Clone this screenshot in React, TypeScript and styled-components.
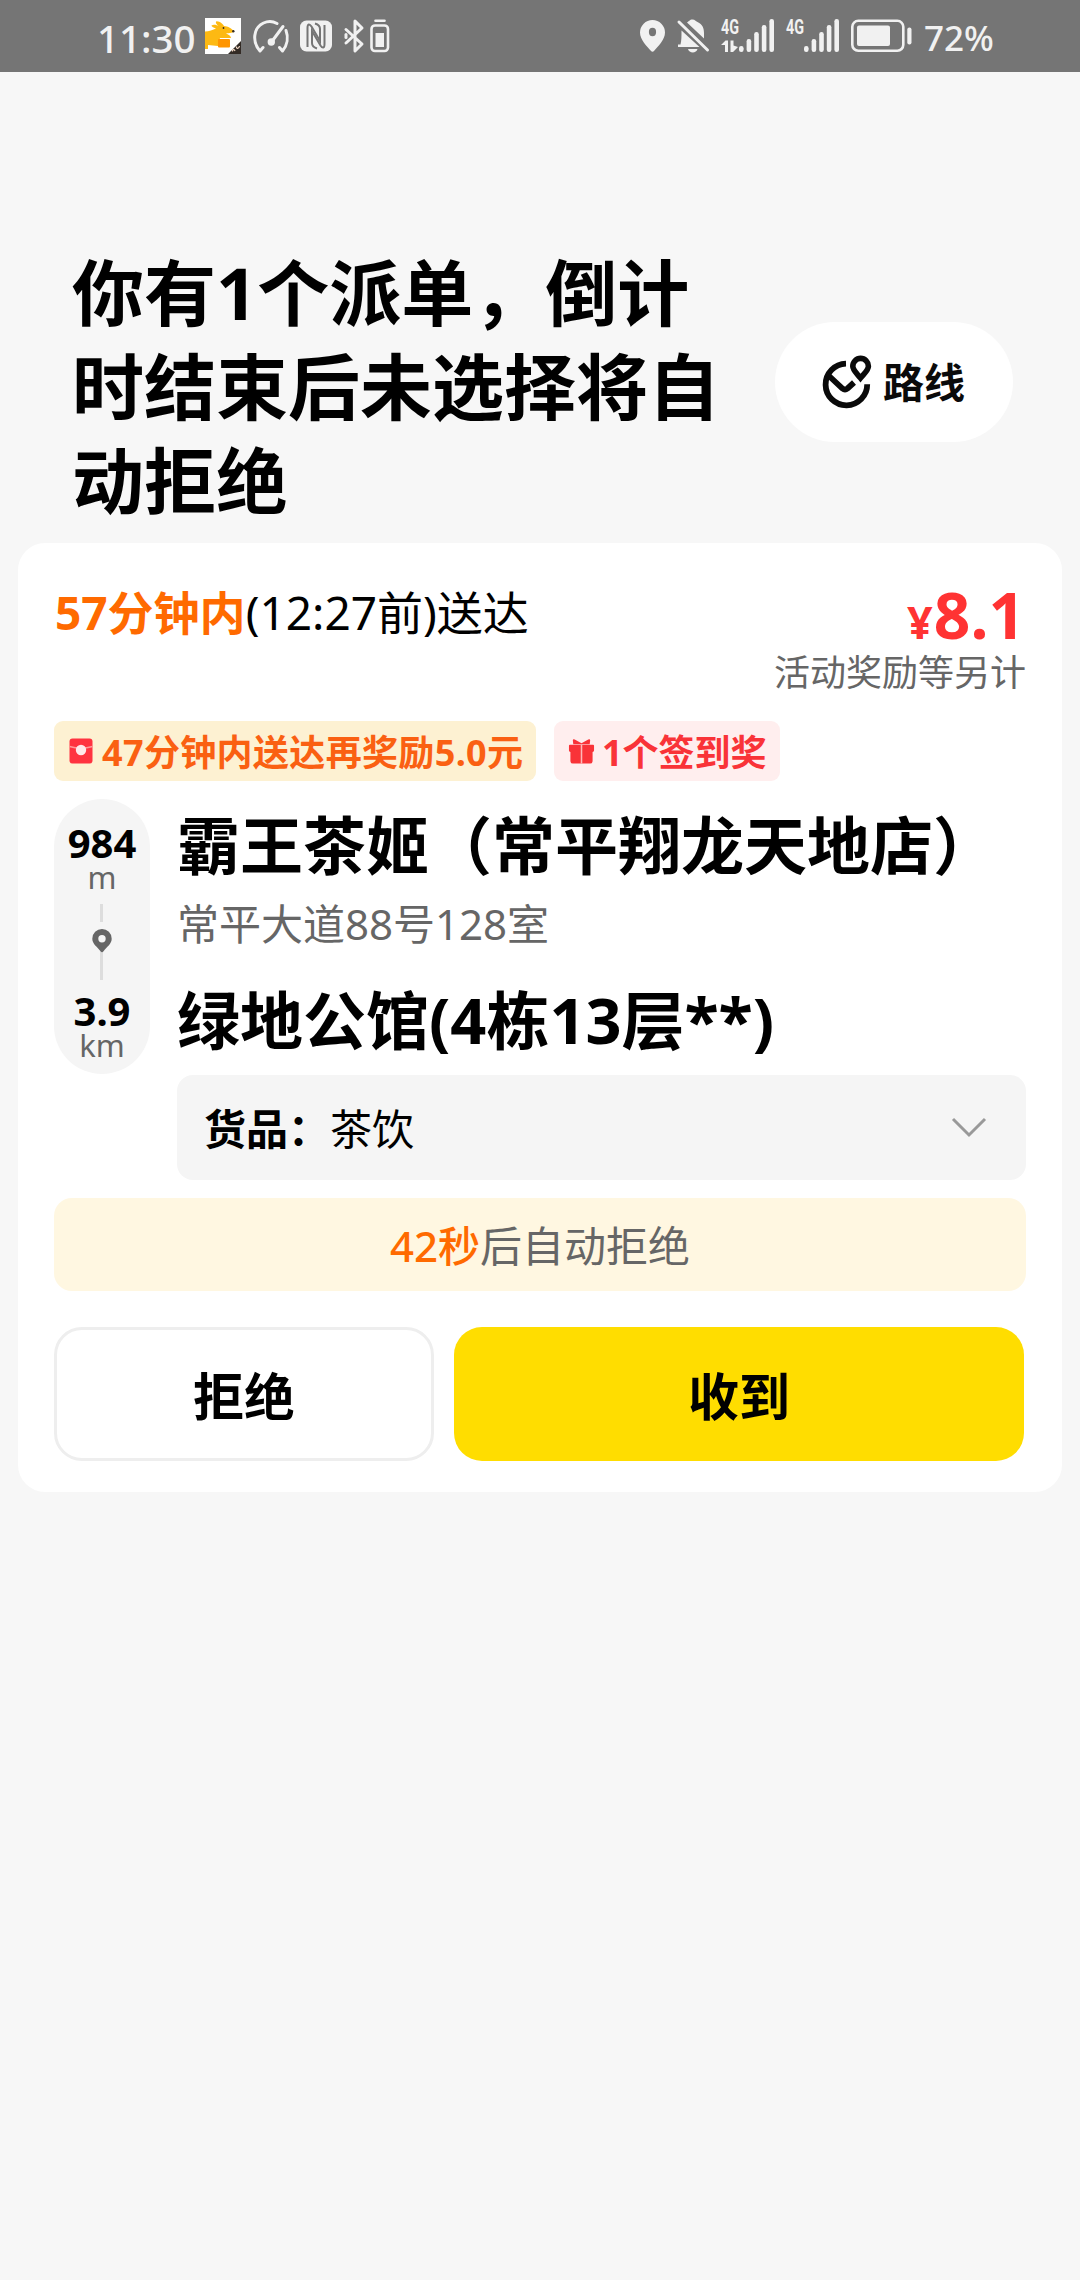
import React from "react";
import styled, { createGlobalStyle } from "styled-components";

const GlobalStyle = createGlobalStyle`
  * { box-sizing: border-box; }
  html, body { margin: 0; padding: 0; background: #f7f7f7; }
  body { font-family: "Noto Sans", "Noto Sans CJK SC", sans-serif; color: #000; }
  svg { display: block; flex: none; overflow: visible; }
`;

const Screen = styled.main`
  width: 1080px;
  min-height: 2280px;
  background: #f7f7f7;
  display: flex;
  flex-direction: column;
`;

const StatusBar = styled.header`
  height: 72px;
  flex: none;
  background: #757575;
  color: #f1f1f1;
  display: flex;
  justify-content: space-between;
  padding: 0 88px 0 97px;
`;

const StatusGroup = styled.div<{ $gap: number }>`
  display: flex;
  align-items: center;
  gap: ${(p) => p.$gap}px;
`;

const StatusText = styled.span<{ $size: number; $width: number }>`
  font-size: ${(p) => p.$size}px;
  font-weight: 500;
  line-height: 68px;
  padding-top: 3px;
  width: ${(p) => p.$width}px;
  white-space: nowrap;
`;

const Heading = styled.section`
  display: flex;
  align-items: flex-start;
  justify-content: space-between;
  padding: 173px 67px 16px 72px;
`;

const Title = styled.h1`
  margin: 0;
  width: 660px;
  font-size: 72px;
  font-weight: 700;
  line-height: 94px;
`;

const RouteButton = styled.button`
  margin-top: 77px;
  width: 238px;
  height: 120px;
  border: 0;
  border-radius: 60px;
  background: #fff;
  color: #0a0a0a;
  display: flex;
  align-items: center;
  gap: 11px;
  padding: 0 0 0 47px;
  font: 700 41px/60px "Noto Sans", "Noto Sans CJK SC", sans-serif;
  white-space: nowrap;
`;

const Card = styled.section`
  margin: 0 18px;
  height: 949px;
  padding: 38px 36px 31px;
  background: #fff;
  border-radius: 27px;
  display: flex;
  flex-direction: column;
`;

const Summary = styled.div`
  display: flex;
  justify-content: space-between;
  height: 140px;
`;

const Deadline = styled.p`
  margin: 1px 0 0 1px;
  font-size: 46px;
  line-height: 60px;
  white-space: nowrap;
`;

const Highlight = styled.span<{ $weight: number }>`
  color: #ff6a00;
  font-weight: ${(p) => p.$weight};
`;

const Fee = styled.div`
  display: flex;
  flex-direction: column;
  align-items: flex-end;
  padding-top: 4px;
  gap: 6px;
`;

const Price = styled.strong`
  display: flex;
  align-items: baseline;
  gap: 1px;
  height: 60px;
  margin-right: 1px;
  color: #ff3333;
  font-size: 64px;
  line-height: 60px;
  font-weight: 700;
`;

const Currency = styled.small`
  font-size: 45px;
  line-height: 40px;
`;

const FeeNote = styled.span`
  color: #666;
  font-size: 36px;
  line-height: 44px;
`;

const Tags = styled.div`
  display: flex;
  gap: 18px;
`;

const Tag = styled.div<{ $bg: string; $color: string; $width: number; $spacing?: number }>`
  width: ${(p) => p.$width}px;
  height: 60px;
  border-radius: 9px;
  background: ${(p) => p.$bg};
  color: ${(p) => p.$color};
  display: flex;
  align-items: center;
  gap: 7px;
  padding-left: 14px;
  font-size: 36px;
  line-height: 60px;
  font-weight: 700;
  letter-spacing: ${(p) => p.$spacing ?? 0}px;
  white-space: nowrap;
`;

const TagLabel = styled.span`
  padding-top: 3px;
`;

const Trip = styled.div`
  display: flex;
  align-items: flex-start;
  gap: 27px;
  margin-top: 18px;
`;

const DistancePill = styled.div`
  width: 96px;
  height: 275px;
  border-radius: 48px;
  background: #f5f5f5;
  padding-top: 24px;
  display: flex;
  flex-direction: column;
  align-items: center;
`;

const Distance = styled.b`
  font-size: 40px;
  line-height: 40px;
`;

const Unit = styled.span`
  color: #666;
  font-size: 31px;
  line-height: 28px;
`;

const Connector = styled.svg`
  margin: 13px 0 11px;
`;

const Stops = styled.div`
  flex: 1;
  display: flex;
  flex-direction: column;
  padding-top: 8px;
`;

const Place = styled.h2`
  margin: 0;
  font-size: 63px;
  line-height: 76px;
  font-weight: 700;
  white-space: nowrap;
`;

const Address = styled.p`
  margin: 15px 0 32px;
  color: #666;
  font-size: 42px;
  line-height: 52px;
`;

const Goods = styled.div`
  margin-top: 17px;
  height: 105px;
  border-radius: 16px;
  background: #f5f5f5;
  padding: 0 40px 0 27px;
  display: flex;
  align-items: center;
  justify-content: space-between;
  font-size: 42px;
  line-height: 60px;
`;

const GoodsText = styled.span`
  padding-top: 3px;
`;

const Countdown = styled.div`
  margin-top: 18px;
  height: 93px;
  border-radius: 18px;
  background: #fff7e1;
  color: #666;
  text-align: center;
  font-size: 42px;
  line-height: 96px;
`;

const Actions = styled.div`
  display: flex;
  gap: 20px;
  margin: 36px 2px 0 0;
`;

const ActionButton = styled.button<{ $primary?: boolean }>`
  height: 134px;
  flex: ${(p) => (p.$primary ? "1" : "0 0 380px")};
  border-radius: 28px;
  border: ${(p) => (p.$primary ? "0" : "3px solid #eee")};
  background: ${(p) => (p.$primary ? "#ffdd00" : "#fff")};
  padding: 4px 0 0;
  color: #000;
  font: 700 51px/60px "Noto Sans", "Noto Sans CJK SC", sans-serif;
`;

const CourierIcon = () => (
  <svg width="36" height="36" viewBox="0 0 36 36">
    <rect width="36" height="36" fill="#fff" />
    <path d="M0 13.500C4 13.500 8 12 11 10.500C8 9.500 6.500 8.500 6.500 7.500C8.500 6 12 7 13.500 8C11.500 6 10 4.500 11.500 3.200C15 3 18 6 19 8C23 8 27 11 29 13C29 15 24 15 21 15.500C24 17 26 18 26 20H15L13 28L3 27L3 31L0 31Z" fill="#fdb913" />
    <circle cx="18.500" cy="10" r="0.900" fill="#332b25" />
    <circle cx="28.300" cy="13.200" r="1.200" fill="#332b25" />
    <rect x="13" y="21" width="12" height="8.500" rx="1" fill="#ff9500" />
    <path d="M36 23V36H23Z" fill="#332b25" />
    <path d="M27.500 33.500C27 31 29.500 31 30 33M31.500 28.500C31 31 34 31 34.500 28" fill="none" stroke="#f6dcc8" strokeWidth="1.200" />
  </svg>
);

const GaugeIcon = () => (
  <svg width="36" height="36" viewBox="0 0 36 36" fill="none" stroke="#f1f1f1" strokeWidth="3" strokeLinecap="round" strokeLinejoin="round">
    <path d="M10 29.500L7 33C-1 24 0 10 10.500 5C15 3 20 3.300 24 5.500" />
    <path d="M33 12.500C35.500 19 34.500 27 29.500 33L26.500 29.500" />
    <path d="M18.500 24L30 8.500" />
    <circle cx="18.300" cy="24" r="2.200" fill="#f1f1f1" />
  </svg>
);

const NfcIcon = () => (
  <svg width="32" height="32" viewBox="0 0 32 32">
    <rect y="0.500" width="32" height="31" rx="6.500" fill="#f1f1f1" />
    <path d="M7.500 27V8C7.500 3.500 9.500 3.500 11.500 6.500L20 21V9C20 5.500 18 4.500 15 3.500" fill="none" stroke="#757575" strokeWidth="2" />
    <path d="M24.500 5V24C24.500 28.500 22.500 28.500 20.500 25.500L12 11V23C12 26.500 14 27.500 17 28.500" fill="none" stroke="#757575" strokeWidth="2" />
  </svg>
);

const BluetoothBatteryIcon = () => (
  <svg width="46" height="36" viewBox="0 0 46 36" fill="none" stroke="#f1f1f1" strokeWidth="3" strokeLinejoin="round" strokeLinecap="round">
    <path d="M2 11.500L18 26L11 33V3L18 10L2 25" />
    <path d="M2 16.500V19.500" />
    <rect x="27.500" y="7.500" width="16.500" height="25.500" rx="3.500" strokeWidth="2.600" />
    <path d="M31.500 2.700H40.500" strokeWidth="2.600" />
    <rect x="31.500" y="15" width="8.500" height="14" fill="#f1f1f1" stroke="none" />
  </svg>
);

const LocationIcon = () => (
  <svg width="25" height="32" viewBox="0 0 25 32">
    <path fillRule="evenodd" d="M12.500 0A12.500 12.500 0 0 1 25 12.500C25 20 18 26 14.200 30.800Q12.500 32.500 10.800 30.800C7 26 0 20 0 12.500A12.500 12.500 0 0 1 12.500 0ZM12.500 7.800A3.600 4.200 0 0 0 12.500 16.200A3.600 4.200 0 0 0 12.500 7.800Z" fill="#f1f1f1" />
  </svg>
);

const MutedBellIcon = () => (
  <svg width="32" height="34" viewBox="0 0 32 34" fill="#f1f1f1">
    <path d="M4.500 11.500L22.500 28H1V25.500H3.500C4.500 22 4.500 17 4.500 11.500Z" />
    <path d="M10 3.500C12 2.500 12.500 0.500 15.500 0.500C18 0.500 18.500 2 20.500 3C25.500 5.500 27 9 27 14V19.500Z" />
    <path d="M11 30H20.500C19.500 34.500 12 34.500 11 30Z" />
    <path d="M2 3L30.500 31" stroke="#f1f1f1" strokeWidth="3" strokeLinecap="round" />
  </svg>
);

const SignalIcon = ({ data }: { data?: boolean }) => (
  <svg width="53" height="36" viewBox="0 0 53 36" fill="#f1f1f1">
    <text x="0" y="16" fontSize="20" fontWeight="700" fontFamily="Roboto" textLength="18" lengthAdjust="spacingAndGlyphs">4G</text>
    {data && <path d="M0 27L4.500 22.500H7V34H4V27ZM9.500 22.500H12.500V27.500L17 29L12 34H9.500Z" />}
    {[28, 21, 14, 7, 1].map((top, i) => (
      <rect key={top} x={18 + i * 7.600} y={top} width="4.600" height={34 - top} rx="2.200" />
    ))}
  </svg>
);

const BatteryIcon = () => (
  <svg width="61" height="34" viewBox="0 0 61 34">
    <rect x="1.300" y="1.800" width="51" height="30" rx="6" fill="none" stroke="#f1f1f1" strokeWidth="2.600" />
    <rect x="6" y="6.500" width="33" height="20.500" rx="2" fill="#f1f1f1" />
    <rect x="56.300" y="8.500" width="4.200" height="17" rx="2" fill="#f1f1f1" />
  </svg>
);

const RouteIcon = () => (
  <svg width="50" height="54" viewBox="0 0 50 54" fill="none" stroke="#0a0a0a" strokeWidth="5.800">
    <path d="M24 8.700A20.800 20.800 0 1 0 45.200 29.300" />
    <path d="M6 20L20.500 33.500Q23 35.500 25.500 33.500L32 27.500" />
    <path d="M38.500 23C34 17.500 30.800 15 30.800 11.200A7.800 7.800 0 0 1 46.400 11.200C46.400 15 43 17.500 38.500 23Z" strokeWidth="5.600" />
  </svg>
);

const RedPacketIcon = () => (
  <svg width="27" height="28" viewBox="0 0 27 28">
    <rect x="1.500" y="1.500" width="23" height="25" rx="3" fill="#ff3340" />
    <path d="M1.500 9.500Q13 13 24.500 9.500" fill="none" stroke="#ff9a9a" strokeWidth="1.600" />
    <circle cx="13" cy="13" r="5.200" fill="#ffe8ea" />
  </svg>
);

const GiftIcon = () => (
  <svg width="27" height="27" viewBox="0 0 28 28" fill="#f93338">
    <path d="M5 2.500Q5 0.800 7 1.600L14 5.500L21 1.600Q23 0.800 23 2.500L22.500 6.500H5.500Z" />
    <path d="M2 7H26Q27 7 27 8V13Q27 14.500 25.500 14.500V24Q25.500 26.500 23 26.500H5Q2.500 26.500 2.500 24V14.500Q1 14.500 1 13V8Q1 7 2 7Z" />
    <path d="M14 7V26.500" stroke="#ffb8b8" strokeWidth="1.600" />
  </svg>
);

const ChevronDown = () => (
  <svg width="34" height="20" viewBox="0 0 34 20" fill="none" stroke="#999" strokeWidth="3">
    <path d="M1 1L17 17L33 1" />
  </svg>
);

export default function App() {
  return (
    <Screen lang="zh-CN">
      <GlobalStyle />
      <StatusBar>
        <StatusGroup $gap={11.5}>
          <StatusText $size={38.5} $width={96.5}>11:30</StatusText>
          <CourierIcon />
          <GaugeIcon />
          <NfcIcon />
          <BluetoothBatteryIcon />
        </StatusGroup>
        <StatusGroup $gap={12}>
          <LocationIcon />
          <MutedBellIcon />
          <SignalIcon data />
          <SignalIcon />
          <BatteryIcon />
          <StatusText $size={35} $width={68}>72%</StatusText>
        </StatusGroup>
      </StatusBar>

      <Heading>
        <Title>你有1个派单，倒计时结束后未选择将自动拒绝</Title>
        <RouteButton>
          <RouteIcon />
          路线
        </RouteButton>
      </Heading>

      <Card>
        <Summary>
          <Deadline>
            <Highlight $weight={700}>57分钟内</Highlight>(12:27前)送达
          </Deadline>
          <Fee>
            <Price>
              <Currency>¥</Currency>8.1
            </Price>
            <FeeNote>活动奖励等另计</FeeNote>
          </Fee>
        </Summary>

        <Tags>
          <Tag $bg="#fdf1d2" $color="#fa6012" $width={482} $spacing={0.35}>
            <RedPacketIcon />
            <TagLabel>47分钟内送达再奖励5.0元</TagLabel>
          </Tag>
          <Tag $bg="#ffeeee" $color="#f93338" $width={226}>
            <GiftIcon />
            <TagLabel>1个签到奖</TagLabel>
          </Tag>
        </Tags>

        <Trip>
          <DistancePill>
            <Distance>984</Distance>
            <Unit>m</Unit>
            <Connector width="20" height="76" viewBox="0 0 20 76">
              <path d="M9.500 0V18M9.500 47V76" stroke="#ddd" strokeWidth="3" />
              <path fillRule="evenodd" d="M10 25A9.700 9.700 0 0 1 19.700 34.700C19.700 40 14.500 43 11.500 47.300Q10 49 8.500 47.300C5.500 43 0.300 40 0.300 34.700A9.700 9.700 0 0 1 10 25ZM10 31A3.700 3.700 0 0 0 10 38.400A3.700 3.700 0 0 0 10 31Z" fill="#666" />
            </Connector>
            <Distance>3.9</Distance>
            <Unit>km</Unit>
          </DistancePill>
          <Stops>
            <Place>霸王茶姬（常平翔龙天地店）</Place>
            <Address>常平大道88号128室</Address>
            <Place>绿地公馆(4栋13层**)</Place>
            <Goods>
              <GoodsText>
                <b>货品：</b>茶饮
              </GoodsText>
              <ChevronDown />
            </Goods>
          </Stops>
        </Trip>

        <Countdown>
          <Highlight $weight={500}>42秒</Highlight>后自动拒绝
        </Countdown>

        <Actions>
          <ActionButton>拒绝</ActionButton>
          <ActionButton $primary>收到</ActionButton>
        </Actions>
      </Card>
    </Screen>
  );
}
